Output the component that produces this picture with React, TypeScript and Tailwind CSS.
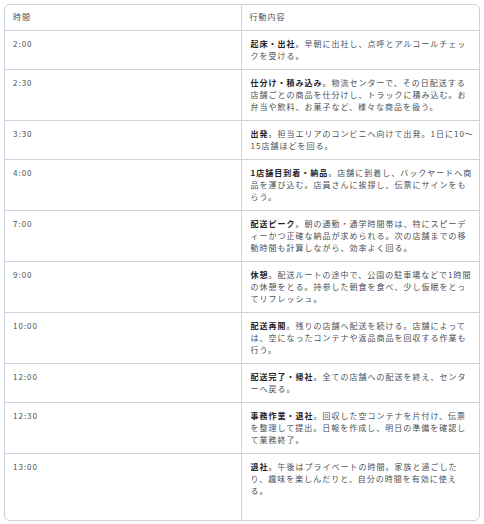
import React from "react";

type Row = {
   time: string;
   title: string;
   body: string;
};

const rows: Row[] = [
   { time: "2:00", title: "起床・出社", body: "。早朝に出社し、点呼とアルコールチェックを受ける。" },
   {
      time: "2:30",
      title: "仕分け・積み込み",
      body: "。物流センターで、その日配送する店舗ごとの商品を仕分けし、トラックに積み込む。お弁当や飲料、お菓子など、様々な商品を扱う。",
   },
   { time: "3:30", title: "出発", body: "。担当エリアのコンビニへ向けて出発。1日に10〜15店舗ほどを回る。" },
   {
      time: "4:00",
      title: "1店舗目到着・納品",
      body: "。店舗に到着し、バックヤードへ商品を運び込む。店員さんに挨拶し、伝票にサインをもらう。",
   },
   {
      time: "7:00",
      title: "配送ピーク",
      body: "。朝の通勤・通学時間帯は、特にスピーディーかつ正確な納品が求められる。次の店舗までの移動時間も計算しながら、効率よく回る。",
   },
   {
      time: "9:00",
      title: "休憩",
      body: "。配送ルートの途中で、公園の駐車場などで1時間の休憩をとる。持参した朝食を食べ、少し仮眠をとってリフレッシュ。",
   },
   {
      time: "10:00",
      title: "配送再開",
      body: "。残りの店舗へ配送を続ける。店舗によっては、空になったコンテナや返品商品を回収する作業も行う。",
   },
   { time: "12:00", title: "配送完了・帰社", body: "。全ての店舗への配送を終え、センターへ戻る。" },
   {
      time: "12:30",
      title: "事務作業・退社",
      body: "。回収した空コンテナを片付け、伝票を整理して提出。日報を作成し、明日の準備を確認して業務終了。",
   },
   {
      time: "13:00",
      title: "退社",
      body: "。午後はプライベートの時間。家族と過ごしたり、趣味を楽しんだりと、自分の時間を有効に使える。",
   },
];

export default function App() {
   return (
      <div
         className="min-h-[524px] w-[484px] bg-white p-[4px] text-[8px] leading-[12px] tracking-[1px] text-[#4b4f56]"
         style={{ fontFamily: '"Noto Sans CJK JP", "Noto Sans", sans-serif' }}
      >
         <div className="overflow-hidden rounded-[6px] border border-[#c9d3dd]">
            <table className="w-full table-fixed border-collapse">
               <colgroup>
                  <col className="w-[236px]" />
                  <col />
               </colgroup>
               <thead>
                  <tr>
                     <th className="border-r border-[#c9d3dd] px-[8px] pb-[7px] pt-[6px] text-left font-normal">
                        時間
                     </th>
                     <th className="px-[8px] pb-[7px] pt-[6px] text-left font-normal">行動内容</th>
                  </tr>
               </thead>
               <tbody>
                  {rows.map((row, i) => (
                     <tr key={row.time} className="border-t border-[#c9d3dd]">
                        <td
                           className={`border-r border-[#c9d3dd] px-[8px] pt-[7px] align-top ${
                              i === rows.length - 1 ? "pb-[23px]" : "pb-[7px]"
                           }`}
                        >
                           {row.time}
                        </td>
                        <td
                           className={`pl-[9px] pr-[5px] pt-[7px] align-top ${
                              i === rows.length - 1 ? "pb-[23px]" : "pb-[7px]"
                           }`}
                        >
                           <strong className="font-bold text-[#1f2328]">{row.title}</strong>
                           {row.body}
                        </td>
                     </tr>
                  ))}
               </tbody>
            </table>
         </div>
      </div>
   );
}
